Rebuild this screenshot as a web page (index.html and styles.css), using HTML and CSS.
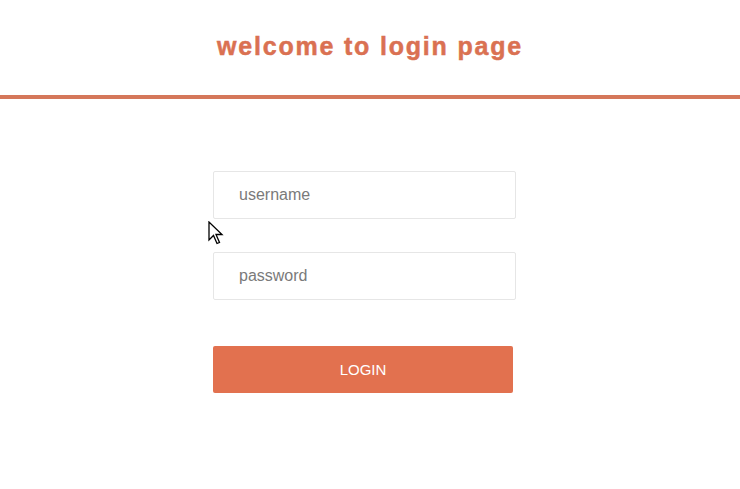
FILE: index.html
```html
<!DOCTYPE html>
<html lang="en">
<head>
    <meta charset="UTF-8">
    <meta name="viewport" content="width=device-width, initial-scale=1.0">
    <title>Login</title>
    <link rel="stylesheet" href="styles.css">
</head>
<body>

<div class="header">
    <h1>welcome to login page</h1>
</div>

<div class="container">
    <form class="login-form">
        <input type="text" class="field" placeholder="username">
        <input type="password" class="field" placeholder="password">
        <button type="button" class="login-btn">LOGIN</button>
    </form>
</div>

<svg class="cursor" width="16" height="25" viewBox="0 0 16 25">
    <path d="M1 1 L1 19 L5.5 14.5 L9 22.5 L11.5 21.5 L8 13.5 L14 13.5 Z" fill="#fff" stroke="#000" stroke-width="1.3" stroke-linejoin="miter"/>
</svg>

</body>
</html>
```

FILE: styles.css
```css
body {
    font-family: "Liberation Sans", Arial, sans-serif;
    margin: 0;
    padding: 0;
    background-color: #fff;
    color: #333;
}
.header {
    height: 95px;
    border-bottom: 4px solid #d5775a;
    text-align: center;
}
.header h1 {
    margin: 0;
    padding-top: 31px;
    font-size: 25px;
    line-height: 30px;
    letter-spacing: 1.8px;
    font-weight: bold;
    color: #da7152;
    -webkit-text-stroke: 0.5px #da7152;
}
.container {
    width: 303px;
    margin: 72px auto 0;
    padding-right: 11px;
}
.login-form {
    display: flex;
    flex-direction: column;
}
.field {
    box-sizing: border-box;
    width: 303px;
    height: 48px;
    margin-bottom: 33px;
    padding: 0 0 0 25px;
    border: 1px solid #e6e6e6;
    border-radius: 2px;
    font-family: "Liberation Sans", Arial, sans-serif;
    font-size: 16px;
    color: #555;
    outline: none;
}
.field::placeholder {
    color: #7a7a7a;
}
.field + .field {
    margin-bottom: 46px;
}
.login-btn {
    width: 300px;
    height: 47px;
    border: none;
    border-radius: 2px;
    background-color: #e2714f;
    color: #fff;
    font-family: "Liberation Sans", Arial, sans-serif;
    font-size: 15px;
    cursor: pointer;
}
.cursor {
    position: absolute;
    left: 208px;
    top: 221px;
}
```
